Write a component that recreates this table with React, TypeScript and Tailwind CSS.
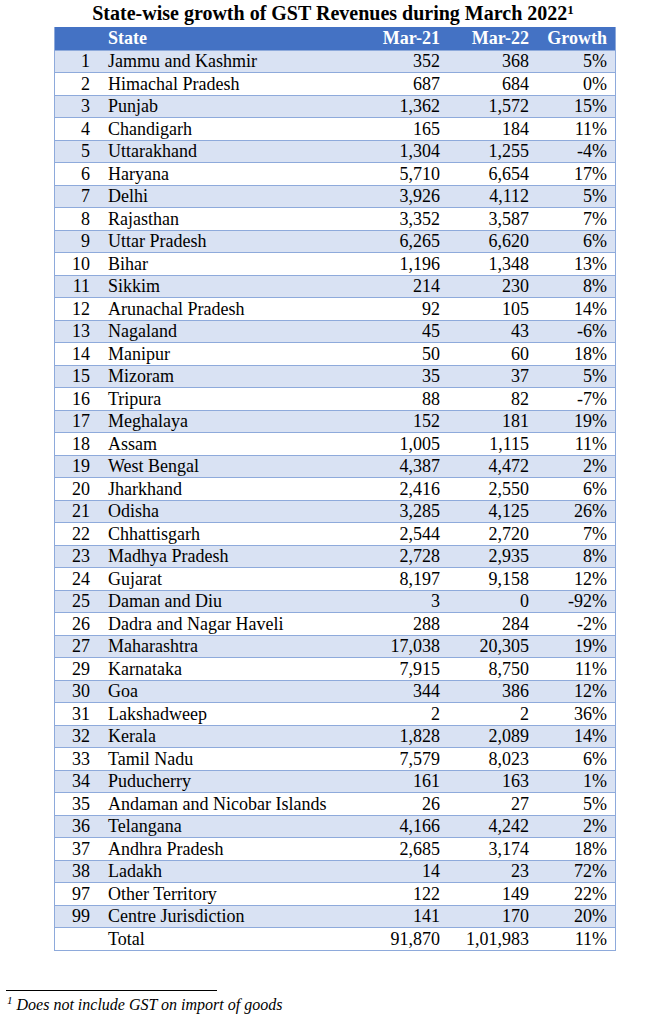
import React from 'react';

interface StateRow {
  no: string;
  state: string;
  mar21: string;
  mar22: string;
  growth: string;
}

// GST collections by state, March 2021 vs March 2022 (Rs. crore)
const rows: StateRow[] = [
  { no: '1', state: 'Jammu and Kashmir', mar21: '352', mar22: '368', growth: '5%' },
  { no: '2', state: 'Himachal Pradesh', mar21: '687', mar22: '684', growth: '0%' },
  { no: '3', state: 'Punjab', mar21: '1,362', mar22: '1,572', growth: '15%' },
  { no: '4', state: 'Chandigarh', mar21: '165', mar22: '184', growth: '11%' },
  { no: '5', state: 'Uttarakhand', mar21: '1,304', mar22: '1,255', growth: '-4%' },
  { no: '6', state: 'Haryana', mar21: '5,710', mar22: '6,654', growth: '17%' },
  { no: '7', state: 'Delhi', mar21: '3,926', mar22: '4,112', growth: '5%' },
  { no: '8', state: 'Rajasthan', mar21: '3,352', mar22: '3,587', growth: '7%' },
  { no: '9', state: 'Uttar Pradesh', mar21: '6,265', mar22: '6,620', growth: '6%' },
  { no: '10', state: 'Bihar', mar21: '1,196', mar22: '1,348', growth: '13%' },
  { no: '11', state: 'Sikkim', mar21: '214', mar22: '230', growth: '8%' },
  { no: '12', state: 'Arunachal Pradesh', mar21: '92', mar22: '105', growth: '14%' },
  { no: '13', state: 'Nagaland', mar21: '45', mar22: '43', growth: '-6%' },
  { no: '14', state: 'Manipur', mar21: '50', mar22: '60', growth: '18%' },
  { no: '15', state: 'Mizoram', mar21: '35', mar22: '37', growth: '5%' },
  { no: '16', state: 'Tripura', mar21: '88', mar22: '82', growth: '-7%' },
  { no: '17', state: 'Meghalaya', mar21: '152', mar22: '181', growth: '19%' },
  { no: '18', state: 'Assam', mar21: '1,005', mar22: '1,115', growth: '11%' },
  { no: '19', state: 'West Bengal', mar21: '4,387', mar22: '4,472', growth: '2%' },
  { no: '20', state: 'Jharkhand', mar21: '2,416', mar22: '2,550', growth: '6%' },
  { no: '21', state: 'Odisha', mar21: '3,285', mar22: '4,125', growth: '26%' },
  { no: '22', state: 'Chhattisgarh', mar21: '2,544', mar22: '2,720', growth: '7%' },
  { no: '23', state: 'Madhya Pradesh', mar21: '2,728', mar22: '2,935', growth: '8%' },
  { no: '24', state: 'Gujarat', mar21: '8,197', mar22: '9,158', growth: '12%' },
  { no: '25', state: 'Daman and Diu', mar21: '3', mar22: '0', growth: '-92%' },
  { no: '26', state: 'Dadra and Nagar Haveli', mar21: '288', mar22: '284', growth: '-2%' },
  { no: '27', state: 'Maharashtra', mar21: '17,038', mar22: '20,305', growth: '19%' },
  { no: '29', state: 'Karnataka', mar21: '7,915', mar22: '8,750', growth: '11%' },
  { no: '30', state: 'Goa', mar21: '344', mar22: '386', growth: '12%' },
  { no: '31', state: 'Lakshadweep', mar21: '2', mar22: '2', growth: '36%' },
  { no: '32', state: 'Kerala', mar21: '1,828', mar22: '2,089', growth: '14%' },
  { no: '33', state: 'Tamil Nadu', mar21: '7,579', mar22: '8,023', growth: '6%' },
  { no: '34', state: 'Puducherry', mar21: '161', mar22: '163', growth: '1%' },
  { no: '35', state: 'Andaman and Nicobar Islands', mar21: '26', mar22: '27', growth: '5%' },
  { no: '36', state: 'Telangana', mar21: '4,166', mar22: '4,242', growth: '2%' },
  { no: '37', state: 'Andhra Pradesh', mar21: '2,685', mar22: '3,174', growth: '18%' },
  { no: '38', state: 'Ladakh', mar21: '14', mar22: '23', growth: '72%' },
  { no: '97', state: 'Other Territory', mar21: '122', mar22: '149', growth: '22%' },
  { no: '99', state: 'Centre Jurisdiction', mar21: '141', mar22: '170', growth: '20%' },
  { no: '', state: 'Total', mar21: '91,870', mar22: '1,01,983', growth: '11%' },
];

const Row: React.FC<{ row: StateRow; shaded: boolean }> = ({ row, shaded }) => (
  <div
    className={`flex h-[22.5px] items-center border-t border-[#8eaadb] text-[18px] leading-[22px] text-black ${
      shaded ? 'bg-[#d9e2f3]' : 'bg-white'
    }`}
  >
    <div className="w-[43px] pr-[8px] text-right">{row.no}</div>
    <div className="flex-1 pl-[10px] whitespace-nowrap">{row.state}</div>
    <div className="w-[90px] pr-[8px] text-right">{row.mar21}</div>
    <div className="w-[89px] pr-[8px] text-right">{row.mar22}</div>
    <div className="w-[78px] pr-[8px] text-right">{row.growth}</div>
  </div>
);

const App: React.FC = () => {
  return (
    <div className="w-[664px] h-[1024px] bg-white font-[family-name:Liberation_Serif,serif] text-black">
      <h1 className="h-[27px] text-center text-[20px] font-bold leading-[27px] pl-[2px]">
        State-wise growth of GST Revenues during March 2022
        <sup className="text-[13px] leading-none">1</sup>
      </h1>

      <div className="ml-[54px] w-[562px] border-x border-b border-[#8eaadb]">
        <div className="flex h-[22.5px] items-center bg-[#4472c4] text-[18px] font-bold leading-[22px] text-white">
          <div className="w-[43px]" />
          <div className="flex-1 pl-[10px]">State</div>
          <div className="w-[90px] pr-[8px] text-right">Mar-21</div>
          <div className="w-[89px] pr-[8px] text-right">Mar-22</div>
          <div className="w-[78px] pr-[8px] text-right">Growth</div>
        </div>
        {rows.map((row, index) => (
          <Row key={row.state} row={row} shaded={index % 2 === 0} />
        ))}
      </div>

      {/* footnote */}
      <div className="mt-[39px] ml-[6px] w-[211px] border-t border-black" />
      <p className="ml-[7px] mt-[4px] text-[16px] italic leading-[20px]">
        <sup className="text-[11px] leading-none mr-[4px]">1</sup>
        Does not include GST on import of goods
      </p>
    </div>
  );
};

export default App;
